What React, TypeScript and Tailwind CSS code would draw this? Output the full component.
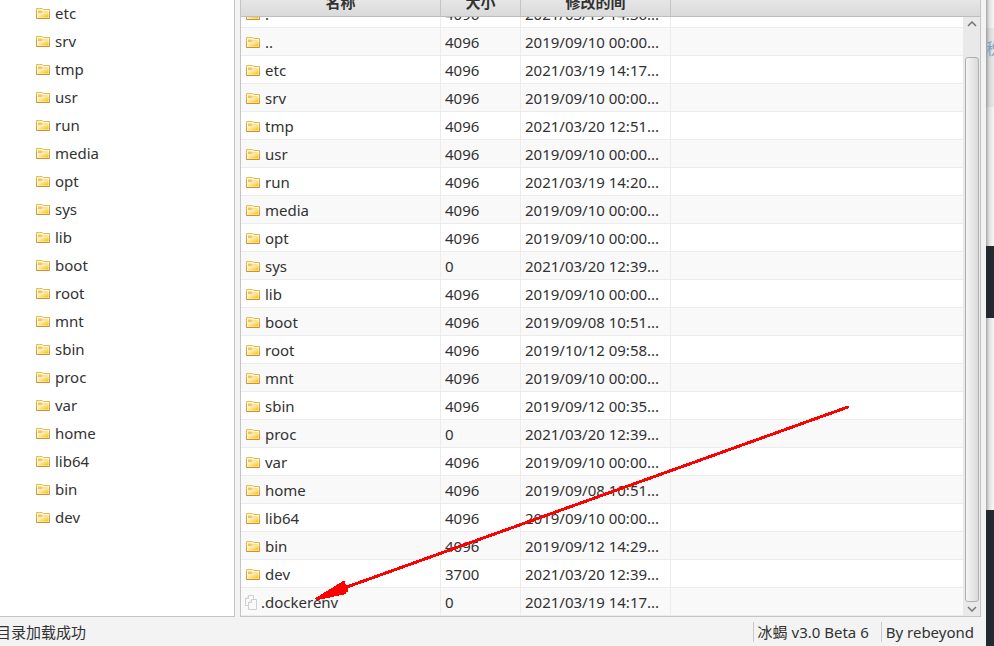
import React from "react";

type Entry = { name: string; size: string; time: string };

const tree: string[] = [
  "etc", "srv", "tmp", "usr", "run", "media", "opt", "sys", "lib", "boot",
  "root", "mnt", "sbin", "proc", "var", "home", "lib64", "bin", "dev",
];

const entries: Entry[] = [
  { name: ".", size: "4096", time: "2021/03/19 14:36..." },
  { name: "..", size: "4096", time: "2019/09/10 00:00..." },
  { name: "etc", size: "4096", time: "2021/03/19 14:17..." },
  { name: "srv", size: "4096", time: "2019/09/10 00:00..." },
  { name: "tmp", size: "4096", time: "2021/03/20 12:51..." },
  { name: "usr", size: "4096", time: "2019/09/10 00:00..." },
  { name: "run", size: "4096", time: "2021/03/19 14:20..." },
  { name: "media", size: "4096", time: "2019/09/10 00:00..." },
  { name: "opt", size: "4096", time: "2019/09/10 00:00..." },
  { name: "sys", size: "0", time: "2021/03/20 12:39..." },
  { name: "lib", size: "4096", time: "2019/09/10 00:00..." },
  { name: "boot", size: "4096", time: "2019/09/08 10:51..." },
  { name: "root", size: "4096", time: "2019/10/12 09:58..." },
  { name: "mnt", size: "4096", time: "2019/09/10 00:00..." },
  { name: "sbin", size: "4096", time: "2019/09/12 00:35..." },
  { name: "proc", size: "0", time: "2021/03/20 12:39..." },
  { name: "var", size: "4096", time: "2019/09/10 00:00..." },
  { name: "home", size: "4096", time: "2019/09/08 10:51..." },
  { name: "lib64", size: "4096", time: "2019/09/10 00:00..." },
  { name: "bin", size: "4096", time: "2019/09/12 14:29..." },
  { name: "dev", size: "3700", time: "2021/03/20 12:39..." },
  { name: ".dockerenv", size: "0", time: "2021/03/19 14:17..." },
];

function FolderIcon() {
  return (
    <svg className="shrink-0" width="14" height="11" viewBox="0 0 14 11" aria-hidden="true">
      <defs>
        <linearGradient id="folder" x1="0" y1="0" x2="1" y2="1">
          <stop offset="0.15" stopColor="#fff9dc" />
          <stop offset="0.9" stopColor="#f0c818" />
        </linearGradient>
        <linearGradient id="edge" x1="0" y1="0" x2="0" y2="1">
          <stop offset="0" stopColor="#e2bd5c" />
          <stop offset="1" stopColor="#d68b35" />
        </linearGradient>
      </defs>
      <path d="M0.5 0.5H6.5L7.5 1.5H13.5V10.5H0.5Z" fill="#fff6d2" stroke="url(#edge)" />
      <path d="M2 2.5H6V3.5H12V4.5H6L5 5.5H2Z" fill="#efc766" />
      <path d="M2 5.5H6L7 4.5H12.5V9.5H2Z" fill="url(#folder)" />
    </svg>
  );
}

function FileIcon() {
  return (
    <svg className="shrink-0" width="12" height="15" viewBox="0 0 12 15" fill="#fafafa" stroke="#cfcfcf" aria-hidden="true">
      <path d="M3.5 0.5H8.5V10.5H0.5V3.5Z" />
      <path d="M3.5 0.5V3.5H0.5" />
      <path d="M6.5 4.5H11.5V14.5H3.5V7.5Z" />
      <path d="M6.5 4.5V7.5H3.5" />
    </svg>
  );
}

function FileRow({ entry, index }: { entry: Entry; index: number }) {
  const first = index === 0;
  const file = entry.name === ".dockerenv";
  const clip = first ? "flex h-[11px] items-end overflow-hidden" : "flex h-7 items-end overflow-hidden";
  const cell = "flex h-7 w-full shrink-0 items-center border-b border-[#ececec]";
  return (
    <tr className={index % 2 ? "bg-[#f9f9f9]" : "bg-white"}>
      <td className="p-0">
        <div className={clip}>
          <div className={cell + " border-r pl-1 " + (file ? "gap-1" : "gap-[5px]")}>
            <span className={file ? "flex pt-0.5" : "flex pt-0.5 pl-px"}>{file ? <FileIcon /> : <FolderIcon />}</span>
            {entry.name}
          </div>
        </div>
      </td>
      <td className="p-0"><div className={clip}><div className={cell + " border-r pl-1"}>{entry.size}</div></div></td>
      <td className="p-0"><div className={clip}><div className={cell + " border-r pl-1"}>{entry.time}</div></div></td>
      <td className="p-0"><div className={clip}><div className={cell} /></div></td>
    </tr>
  );
}

function HeaderCell({ label }: { label: string }) {
  return (
    <th className="p-0 font-bold">
      <div className="flex h-[17px] items-end justify-center overflow-hidden border-r border-b border-r-[#c4c4c4] border-b-[#bdbdbd]">
        <span className="h-6 shrink-0 leading-5">{label}</span>
      </div>
    </th>
  );
}

function Arrow() {
  return (
    <svg className="pointer-events-none absolute top-[400px] left-[310px]" width="545" height="210" viewBox="310 400 545 210" shapeRendering="crispEdges" aria-hidden="true">
      <path d="M848 407L344 588" stroke="#ff0000" strokeWidth="3" strokeLinecap="round" />
      <path d="M314 599L343 581H345L346 586H348V592H346V594L318 600Z" fill="#ff0000" />
    </svg>
  );
}

export default function App() {
  return (
    <div className="relative flex h-screen overflow-hidden bg-white font-['Noto_Sans','Noto_Sans_CJK_SC',sans-serif] text-[15px] leading-5 text-[#323232]">
      <div className="flex min-w-0 flex-1 flex-col bg-[#f3f3f3]">
        <div className="flex gap-[5px]">
          <ul className="w-[235px] shrink-0 border-r border-b border-[#c4c4c4] bg-white">
            {tree.map((name) => (
              <li key={name} className="flex h-7 items-center gap-[5px] pb-0.5 pl-9">
                <FolderIcon />
                {name}
              </li>
            ))}
          </ul>
          <div className="mr-[5px] flex min-w-0 flex-1 border-x border-b border-[#c4c4c4] bg-white">
            <table className="min-w-0 flex-1 table-fixed border-collapse">
              <colgroup>
                <col className="w-[200px]" />
                <col className="w-20" />
                <col className="w-[150px]" />
                <col />
              </colgroup>
              <thead className="bg-linear-to-b from-[#e6e6e6] to-[#d9d9d9]">
                <tr>
                  <HeaderCell label="名称" />
                  <HeaderCell label="大小" />
                  <HeaderCell label="修改的间" />
                  <th className="p-0"><div className="h-[17px] border-b border-[#bdbdbd]" /></th>
                </tr>
              </thead>
              <tbody>
                {entries.map((entry, index) => <FileRow key={entry.name} entry={entry} index={index} />)}
              </tbody>
            </table>
            <div className="flex w-[17px] shrink-0 flex-col">
              <div className="h-[17px] border-b border-[#bdbdbd] bg-linear-to-b from-[#e6e6e6] to-[#d9d9d9]" />
              <div className="flex flex-1 flex-col items-center bg-[#e9e9e9]">
                <svg className="my-1 shrink-0" width="10" height="6" viewBox="0 0 10 6" fill="none" stroke="#757575" strokeWidth="1.5"><path d="M1 5L5 1L9 5" /></svg>
                <div className="mt-[26px] w-[14px] flex-1 rounded-[3px] border border-[#b0b0b0] bg-linear-to-r from-[#f5f5f5] to-[#dadada]" />
                <svg className="my-1 shrink-0" width="10" height="6" viewBox="0 0 10 6" fill="none" stroke="#757575" strokeWidth="1.5"><path d="M1 1L5 5L9 1" /></svg>
              </div>
            </div>
          </div>
        </div>
        <footer className="flex flex-1 items-center justify-between">
          <span className="-ml-1">目录加载成功</span>
          <div className="flex gap-3">
            <span className="border-l border-[#c8c8c8] pl-1">冰蝎 v3.0 Beta 6</span>
            <span className="border-l border-[#c8c8c8] pr-3 pl-1">By rebeyond</span>
          </div>
        </footer>
      </div>
      <aside className="flex w-2 shrink-0 flex-col overflow-hidden bg-linear-to-r from-[#a8a8a8] via-[#e0e0e0] via-40% to-[#f8f8f8]">
        <div className="h-7" />
        <div className="h-[79px] overflow-hidden bg-black/5 pt-[10px] text-[#7f9fbe]">税</div>
        <div className="h-[139px]" />
        <div className="h-[72px] bg-[#24282f]" />
        <div className="h-48" />
        <div className="flex-1 bg-[#24282f]" />
      </aside>
      <Arrow />
    </div>
  );
}
